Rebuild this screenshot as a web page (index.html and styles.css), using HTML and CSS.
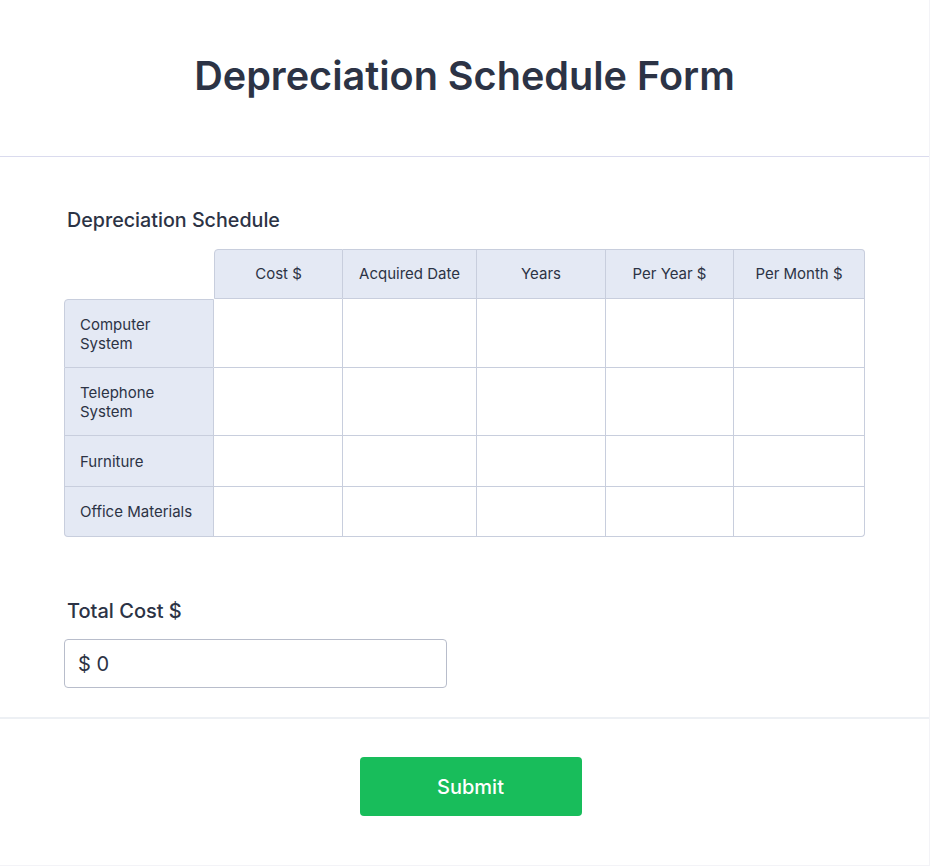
FILE: index.html
```html
<!DOCTYPE html>
<html lang="en">
<head>
<meta charset="utf-8">
<title>Depreciation Schedule Form</title>
<link rel="stylesheet" href="styles.css">
</head>
<body>
<main class="card">
  <header class="form-header">
    <h1 class="form-title">Depreciation Schedule Form</h1>
  </header>
  <section class="form-body">
    <div class="field">
      <label class="field-label">Depreciation Schedule</label>
      <div class="matrix">
        <div class="corner"></div>
        <div class="head first">Cost $</div>
        <div class="head">Acquired Date</div>
        <div class="head">Years</div>
        <div class="head">Per Year $</div>
        <div class="head last">Per Month $</div>

        <div class="rowlabel top">Computer System</div>
        <div class="cell"></div><div class="cell"></div><div class="cell"></div><div class="cell"></div><div class="cell"></div>

        <div class="rowlabel">Telephone System</div>
        <div class="cell"></div><div class="cell"></div><div class="cell"></div><div class="cell"></div><div class="cell"></div>

        <div class="rowlabel">Furniture</div>
        <div class="cell"></div><div class="cell"></div><div class="cell"></div><div class="cell"></div><div class="cell"></div>

        <div class="rowlabel bottom">Office Materials</div>
        <div class="cell"></div><div class="cell"></div><div class="cell"></div><div class="cell"></div><div class="cell corner-br"></div>
      </div>
    </div>
    <div class="field total">
      <label class="field-label" for="total">Total Cost $</label>
      <input class="total-input" id="total" type="text" value="$ 0" readonly>
    </div>
  </section>
  <footer class="form-footer">
    <button class="submit" type="submit">Submit</button>
  </footer>
</main>
</body>
</html>
```

FILE: styles.css
```css
* { box-sizing: border-box; }

html, body {
  margin: 0;
  padding: 0;
}

body {
  background: #f3f3f7;
  font-family: Inter, "Noto Sans", "Liberation Sans", sans-serif;
  color: #2c3345;
}

.card {
  width: 929px;
  height: 865px;
  background: #ffffff;
  display: flex;
  flex-direction: column;
}

.form-header {
  height: 157px;
  border-bottom: 1px solid #dadbee;
  display: flex;
  justify-content: center;
  padding-top: 52px;
}

.form-title {
  margin: 0;
  font-size: 39.6px;
  font-weight: 600;
  line-height: 48px;
  color: #2c3345;
}

.form-body {
  padding: 51px 64px 0 64px;
  height: 562px;
  border-bottom: 2px solid #edf0f4;
}

.field-label {
  display: block;
  font-size: 20px;
  font-weight: 500;
  line-height: 24px;
  padding-left: 3px;
  margin-bottom: 17px;
  color: #2c3345;
}

.field:first-child .field-label {
  font-size: 19.7px;
}

.matrix {
  display: grid;
  grid-template-columns: 150px 129px 134px 129px 128px 131px;
  grid-template-rows: 50px 69px 68px 51px 50px;
  width: 801px;
  font-size: 15px;
  line-height: 19px;
}

.matrix > div {
  border-right: 1px solid #c8cedd;
  border-bottom: 1px solid #c8cedd;
}

.matrix > .corner {
  border: none;
}

.head {
  background: #e4e9f4;
  border-top: 1px solid #c8cedd;
  display: flex;
  align-items: center;
  justify-content: center;
  text-align: center;
  padding-bottom: 1px;
}

.head.first {
  border-left: 1px solid #c8cedd;
  border-top-left-radius: 4px;
}

.head.last {
  border-top-right-radius: 4px;
}

.rowlabel {
  background: #e4e9f4;
  border-left: 1px solid #c8cedd;
  display: flex;
  align-items: center;
  padding: 0 16px 0 15px;
}

.rowlabel.top {
  border-top: 1px solid #c8cedd;
  border-top-left-radius: 4px;
}

.rowlabel.bottom {
  border-bottom-left-radius: 4px;
}

.cell {
  background: #ffffff;
}

.corner-br {
  border-bottom-right-radius: 4px;
}

.field.total {
  margin-top: 62px;
}

.field.total .field-label {
  margin-bottom: 16px;
}

.total-input {
  display: block;
  width: 383px;
  height: 49px;
  border: 1px solid #b8bdcb;
  border-radius: 4px;
  padding: 0 13px;
  font-family: inherit;
  font-size: 20px;
  color: #2c3345;
  background: #ffffff;
  outline: none;
}

.form-footer {
  flex: 1;
  display: flex;
  justify-content: center;
  padding-top: 38px;
  padding-left: 12px;
}

.submit {
  width: 222px;
  height: 59px;
  border: none;
  border-radius: 4px;
  background: #18bd5b;
  color: #ffffff;
  font-family: inherit;
  font-size: 20px;
  font-weight: 500;
  cursor: pointer;
}
```
